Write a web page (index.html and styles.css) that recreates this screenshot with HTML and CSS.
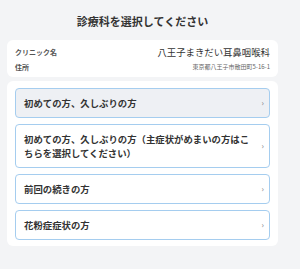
FILE: index.html
```html
<!DOCTYPE html>
<html lang="ja">

<head>
  <meta charset="UTF-8">
  <meta name="viewport" content="width=device-width, initial-scale=1.0">
  <title>診療科を選択してください</title>
  <link rel="stylesheet" href="styles.css">
</head>

<body>
  <div class="page">
    <div class="title">診療科を選択してください</div>

    <div class="card clinic">
      <div class="clinic-row">
        <div class="label">クリニック名</div>
        <div class="clinic-name">八王子まきだい耳鼻咽喉科</div>
      </div>
      <div class="clinic-row">
        <div class="label">住所</div>
        <div class="clinic-address">東京都八王子市散田町5-16-1</div>
      </div>
    </div>

    <div class="card menu">
      <button class="menu-item active">
        <span class="menu-text">初めての方、久しぶりの方</span>
        <span class="chevron">›</span>
      </button>
      <button class="menu-item">
        <span class="menu-text">初めての方、久しぶりの方（主症状がめまいの方はこちらを選択してください）</span>
        <span class="chevron">›</span>
      </button>
      <button class="menu-item">
        <span class="menu-text">前回の続きの方</span>
        <span class="chevron">›</span>
      </button>
      <button class="menu-item">
        <span class="menu-text">花粉症症状の方</span>
        <span class="chevron">›</span>
      </button>
    </div>
  </div>
</body>

</html>
```

FILE: styles.css
```css
* {
  margin: 0;
  padding: 0;
  box-sizing: border-box;
}

body {
  font-family: "Noto Sans CJK JP", "Noto Sans", sans-serif;
  background: #f3f4f6;
  color: #333;
}

.page {
  width: 271px;
  margin-left: 7px;
  display: flex;
  flex-direction: column;
  gap: 4px;
}

.title {
  font-size: 11px;
  font-weight: 700;
  line-height: 16px;
  text-align: center;
  padding: 13px 0 7px;
  color: #333;
}

.card {
  background: #fff;
  border-radius: 6px;
}

.clinic {
  padding: 4px 8px 3px;
  display: flex;
  flex-direction: column;
}

.clinic-row {
  display: flex;
  justify-content: space-between;
  align-items: center;
  height: 15px;
}

.label {
  font-size: 7px;
  font-weight: 700;
  color: #555;
}

.clinic-name {
  font-size: 9.4px;
  color: #333;
}

.clinic-address {
  font-size: 6px;
  color: #666;
}

.menu {
  padding: 7px 8px 6px;
  display: flex;
  flex-direction: column;
  gap: 6px;
}

.menu-item {
  display: flex;
  align-items: center;
  justify-content: space-between;
  gap: 8px;
  width: 100%;
  padding: 7px 5px 7px 8px;
  border: 1px solid #a5cdef;
  border-radius: 4px;
  background: #fff;
  font-family: inherit;
  text-align: left;
  cursor: pointer;
}

.menu-item.active {
  background: #eef0f4;
}

.menu-text {
  font-size: 9.4px;
  font-weight: 700;
  line-height: 14px;
  color: #333;
}

.chevron {
  font-size: 8px;
  color: #777;
  line-height: 14px;
}
```
